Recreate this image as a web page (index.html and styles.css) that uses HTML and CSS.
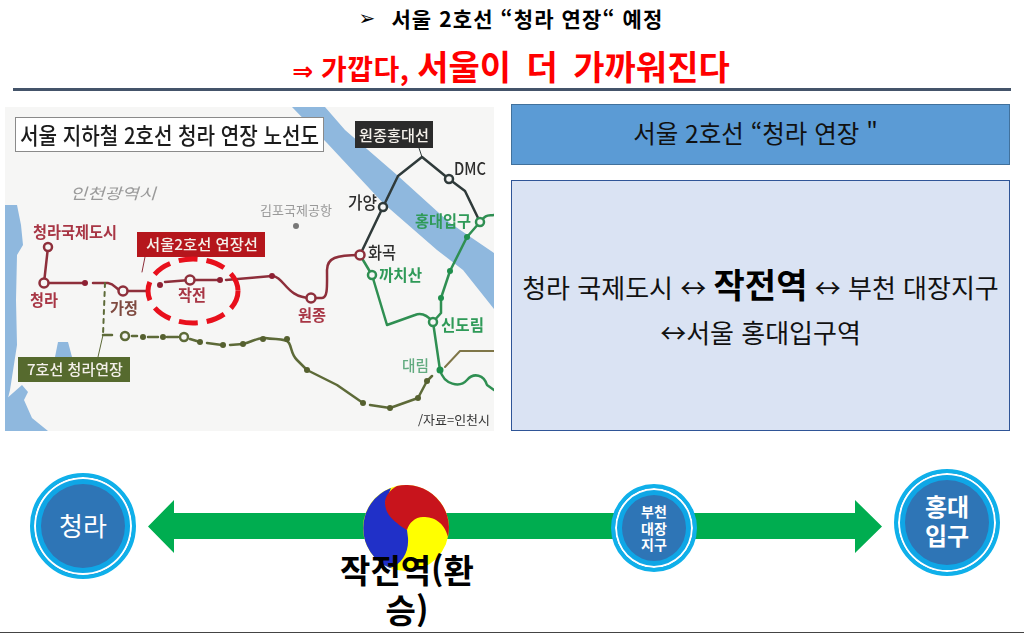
FILE: index.html
```html
<!DOCTYPE html>
<html lang="ko">
<head>
<meta charset="utf-8">
<title>서울 2호선 청라 연장</title>
<link rel="stylesheet" href="styles.css">
</head>
<body>
<div class="page">
  <header class="head">
    <h1 class="head-title"><span class="bullet">➢</span><span>서울 2호선 “청라 연장“ 예정</span></h1>
    <h2 class="head-sub"><span class="sub-arrow">⇒</span> <span class="sub-small">가깝다,</span> <span class="sub-big">서울이 더 가까워진다</span></h2>
  </header>
  <main class="content">
    <svg class="map" viewBox="5 107 489 324" role="img" aria-label="서울 지하철 2호선 청라 연장 노선도">
      <rect x="5" y="107" width="489" height="324" fill="#f6f6f5"/>
      <g fill="#8fb8de">
        <path d="M292 107H325L345 130 397 175 450 223 494 253V309L463 270 437 250 383 203 327 143Z"/>
        <path d="M5 205H17L21 225 23 245 17 255 16 300 17 345 10 390 5 410Z"/>
        <path d="M58 342H68L72 357H55Z"/>
        <path d="M5 431V400L22 385 28 392 24 400 32 418 48 431Z"/>
      </g>
      <rect x="15.500" y="117.500" width="308" height="34" fill="#fff" stroke="#8a8a8a"/>
      <text class="t-title" x="20" y="144" textLength="299" lengthAdjust="spacingAndGlyphs">서울 지하철 2호선 청라 연장 노선도</text>
      <text class="t-city" x="70" y="199" textLength="86" lengthAdjust="spacingAndGlyphs">인천광역시</text>
      <text class="t-air" x="260" y="215" textLength="72" lengthAdjust="spacingAndGlyphs">김포국제공항</text>
      <circle cx="296" cy="226" r="3" fill="#777"/>

      <g fill="none" stroke-linecap="round" stroke-linejoin="round">
        <path stroke="#2f3a3a" stroke-width="2.500" d="M360 255 383 207 398 176 422 157 449 179 465 191 480 222"/>
        <path stroke="#2f8f52" stroke-width="2.500" d="M360 255 372 275 387 325 415 315C422 312 428 316 433 322L440 370C444 385 460 388 467 380 474 372 484 375 487 385L494 390"/>
        <path stroke="#2f8f52" stroke-width="2.500" d="M480 222C486 214 488 216 494 215M480 222 467 237 450 271 441 298V313L433 322"/>
        <path stroke="#7f7648" stroke-width="2" d="M445 367 460 351H494"/>
        <path stroke="#8e2f3b" stroke-width="2.500" d="M48 247 44 283H85M93 283H108C116 284 116 291 123 291H146M165 282 190 280H220M226 280 272 276C284 276 286 298 311 298H322C328 298 327 285 327 270 327 258 336 255 360 255"/>
        <path stroke="#5d6a38" stroke-width="2" stroke-dasharray="4 5" d="M105 283 103 335"/>
        <path stroke="#5d6a38" stroke-width="2.500" d="M103 335H112M132 336H137M148 337H158M167 337H178M190 339 200 342M207 343 222 345M230 345 243 344C252 342 258 337 265 338 276 340 286 338 289 343 292 348 291 354 297 360L307 370 337 385 363 403M370 405 390 408 418 398 427 381 432 376"/>
        <path stroke="#5d6a38" d="M103 335 98 357"/>
        <path stroke="#8e2f3b" d="M145 257 142 272"/>
        <path stroke="#2f3a3a" d="M419 148 422 157"/>
      </g>

      <rect x="137" y="232" width="128" height="25" fill="#b5161c"/>
      <text class="t-box" x="146" y="250" textLength="112" lengthAdjust="spacingAndGlyphs">서울2호선 연장선</text>
      <rect x="355" y="121" width="78" height="27" fill="#2b2b2b"/>
      <text class="t-box" x="359" y="141" textLength="70" lengthAdjust="spacingAndGlyphs">원종홍대선</text>
      <rect x="18" y="357" width="112" height="25" fill="#566a2e"/>
      <text class="t-box" x="27" y="375" textLength="96" lengthAdjust="spacingAndGlyphs">7호선 청라연장</text>

      <g fill="#f6f6f5" stroke-width="2.500">
        <g stroke="#8e2f3b">
          <circle cx="48" cy="247" r="4"/>
          <circle cx="44" cy="283" r="4.500"/>
          <circle cx="123" cy="291" r="4.500"/>
          <circle cx="190" cy="280" r="4.500"/>
          <circle cx="311" cy="298" r="4.500"/>
          <circle cx="360" cy="255" r="4.500"/>
        </g>
        <g stroke="#2f3a3a">
          <circle cx="383" cy="207" r="4"/>
          <circle cx="449" cy="179" r="4"/>
        </g>
        <g stroke="#2f8f52">
          <circle cx="480" cy="222" r="4"/>
          <circle cx="372" cy="275" r="4"/>
          <circle cx="433" cy="322" r="4"/>
        </g>
        <g stroke="#5d6a38">
          <circle cx="125" cy="336" r="4"/>
          <circle cx="184" cy="337" r="4"/>
        </g>
      </g>
      <g fill="#8e2033">
        <circle cx="85" cy="283" r="3"/><circle cx="160" cy="285" r="3"/><circle cx="220" cy="280" r="3"/><circle cx="272" cy="276" r="3"/>
      </g>
      <g fill="#1f8f4c">
        <circle cx="467" cy="237" r="3"/><circle cx="450" cy="271" r="3"/><circle cx="441" cy="298" r="3"/><circle cx="440" cy="370" r="3.500"/>
      </g>
      <g fill="#55602f">
        <circle cx="143" cy="337" r="3"/><circle cx="163" cy="337" r="3"/><circle cx="200" cy="342" r="3"/><circle cx="223" cy="345" r="3"/><circle cx="243" cy="344" r="3"/><circle cx="263" cy="339" r="3"/><circle cx="287" cy="339" r="3"/><circle cx="307" cy="370" r="3"/><circle cx="363" cy="403" r="3"/><circle cx="390" cy="408" r="3"/><circle cx="418" cy="398" r="3"/><circle cx="427" cy="381" r="3"/>
      </g>

      <ellipse cx="193" cy="291" rx="45" ry="32" fill="none" stroke="#e8101c" stroke-width="5" stroke-dasharray="19 9"/>

      <g class="t-red">
        <text x="33" y="238" textLength="84" lengthAdjust="spacingAndGlyphs">청라국제도시</text>
        <text x="30" y="306" textLength="28" lengthAdjust="spacingAndGlyphs">청라</text>
        <text x="178" y="301" textLength="28" lengthAdjust="spacingAndGlyphs">작전</text>
        <text x="298" y="321" textLength="28" lengthAdjust="spacingAndGlyphs">원종</text>
      </g>
      <text class="t-brown" x="110" y="314" textLength="28" lengthAdjust="spacingAndGlyphs">가정</text>
      <g class="t-dark">
        <text x="348" y="209" textLength="29" lengthAdjust="spacingAndGlyphs">가양</text>
        <text x="368" y="259" textLength="28" lengthAdjust="spacingAndGlyphs">화곡</text>
        <text x="454" y="175" textLength="32" lengthAdjust="spacingAndGlyphs">DMC</text>
      </g>
      <g class="t-green">
        <text x="415" y="227" textLength="56" lengthAdjust="spacingAndGlyphs">홍대입구</text>
        <text x="379" y="281" textLength="43" lengthAdjust="spacingAndGlyphs">까치산</text>
        <text x="441" y="331" textLength="43" lengthAdjust="spacingAndGlyphs">신도림</text>
      </g>
      <text class="t-green-light" x="402" y="371" textLength="27" lengthAdjust="spacingAndGlyphs">대림</text>
      <text class="t-src" x="418" y="425" textLength="72" lengthAdjust="spacingAndGlyphs">/자료=인천시</text>
    </svg>
    <section class="info">
      <h3 class="info-title">서울 2호선 “청라 연장 "</h3>
      <div class="info-body">
        <p class="info-line">청라 국제도시 ↔ <strong class="info-strong">작전역</strong> ↔ 부천 대장지구</p>
        <p class="info-line">↔서울 홍대입구역</p>
      </div>
    </section>
  </main>
  <section class="route">
    <svg class="arrow" viewBox="148 500 734 53" aria-hidden="true">
      <path d="M148 526.500 174 500V513H855V500L882 526.500 855 553V539H174V553Z" fill="#00ad50"/>
    </svg>
    <svg class="taegeuk" viewBox="-43 -43 86 86" aria-hidden="true">
      <circle r="43" fill="#ffff00"/>
      <path d="M-15-40A43 43 0 0 0 -16 40C-4 36 3 24 2 10L1 2-21-25Z" fill="#2030c8"/>
      <path d="M-9-42A43 43 0 0 1 42 9C38-6 28-11 17-11 9-11 3-5 1 2-3 0-7-3-9-5-16-10-21-17-21-25-21-32-16-38-9-42Z" fill="#c8141c"/>
    </svg>
    <div class="stop stop-cheongna"><span class="stop-text">청라</span></div>
    <div class="stop stop-bucheon"><span class="stop-text">부천
대장
지구</span></div>
    <div class="stop stop-hongdae"><span class="stop-text">홍대
입구</span></div>
    <div class="transfer">작전역(환승)</div>
  </section>
  <div class="bottom-rule"></div>
</div>
</body>
</html>
```

FILE: styles.css
```css
* { box-sizing: border-box; }
html, body { margin: 0; padding: 0; background: #fff; }
body { font-family: "Noto Sans CJK KR", "Noto Sans", sans-serif; color: #000; }
.page { width: 1024px; height: 634px; display: flex; flex-direction: column; overflow: hidden; position: relative; }

.head { height: 92px; flex: none; padding: 0 13px; display: flex; flex-direction: column; align-items: center; }
.head::after { content: ""; flex: none; order: 3; width: 998px; height: 3px; background: #44546a; margin-top: auto; margin-bottom: 1px; }
.head-title { margin: 3px 0 0; height: 30px; flex: none; font-size: 21px; line-height: 30px; font-weight: 700; letter-spacing: 1.100px; display: flex; align-items: center; gap: 15px; padding-right: 2px; white-space: nowrap; }
.bullet { font-family: "DejaVu Sans", sans-serif; font-size: 20px; font-weight: 400; }
.head-sub { margin: 13px 0 0; height: 40px; flex: none; line-height: 40px; color: #f00; font-weight: 700; white-space: nowrap; padding-right: 2px; word-spacing: 1px; }
.sub-arrow { font-family: "DejaVu Sans", sans-serif; font-size: 25px; }
.sub-small { font-size: 28px; letter-spacing: 0.500px; }
.sub-big { font-size: 34px; word-spacing: 6px; }

.content { display: flex; gap: 17px; padding: 12px 14px 0 5px; height: 339px; flex: none; align-items: flex-start; }
.map { display: block; width: 489px; height: 324px; flex: none; filter: blur(0.6px); margin-top: 3px; }
.info { flex: 1; height: 327px; display: flex; flex-direction: column; gap: 15px; }
.info-title { margin: 0; height: 61px; flex: none; padding: 0 10px 5px 0; background: #5b9bd5; border: 1px solid #41719c; font-size: 24.500px; font-weight: 400; color: #111; display: flex; align-items: center; justify-content: center; }
.info-body { flex: 1; background: #dae3f3; border: 1px solid #2f5597; display: flex; flex-direction: column; align-items: center; justify-content: center; gap: 7px; padding-top: 4px; }
.info-line { margin: 0; font-size: 26px; line-height: 41px; height: 41px; white-space: nowrap; color: #111; }
.info-strong { font-size: 34px; font-weight: 700; color: #000; }

.route { position: relative; flex: 1; }
.arrow { position: absolute; left: 148px; top: 69px; width: 734px; height: 53px; }
.taegeuk { position: absolute; left: 363px; top: 54px; width: 86px; height: 86px; }
.stop { position: absolute; border-radius: 50%; background: #2e75b6; border: 4px solid #0fb0ea; box-shadow: inset 0 0 0 2px #fff, inset 0 0 0 7px #0fa6e6; display: flex; align-items: center; justify-content: center; color: #fff; text-align: center; }
.stop-text { display: block; white-space: pre-line; }
.stop-cheongna { left: 30px; top: 42px; width: 106px; height: 106px; font-size: 26px; padding-bottom: 3px; }
.stop-bucheon { left: 611px; top: 53px; width: 86px; height: 88px; font-size: 14px; line-height: 16.500px; font-weight: 700; }
.stop-hongdae { left: 894px; top: 38px; width: 106px; height: 107px; font-size: 24px; line-height: 29px; font-weight: 700; padding-bottom: 6px; }
.transfer { position: absolute; left: 337px; top: 118px; width: 140px; font-size: 33px; line-height: 40px; font-weight: 700; text-align: center; color: #000; word-break: break-all; }
.bottom-rule { position: absolute; left: 0; right: 0; bottom: 1px; height: 1px; background: #444; }

.t-title { font-size: 22.500px; fill: #1c1c1c; font-weight: 500; }
.t-city { font-size: 15px; font-style: italic; fill: #9a9a9a; }
.t-air { font-size: 13px; fill: #999; }
.t-box { font-size: 15px; fill: #f4f0ea; font-weight: 500; }
.t-red text { font-size: 16px; fill: #a83645; font-weight: 700; }
.t-brown { font-size: 16px; fill: #7f4a40; font-weight: 700; }
.t-dark text { font-size: 17px; fill: #2d2d2d; font-weight: 500; }
.t-green text { font-size: 16px; fill: #2f9a58; font-weight: 700; }
.t-green-light { font-size: 15px; fill: #63ab80; font-weight: 500; }
.t-src { font-size: 12.500px; fill: #333; }
```
